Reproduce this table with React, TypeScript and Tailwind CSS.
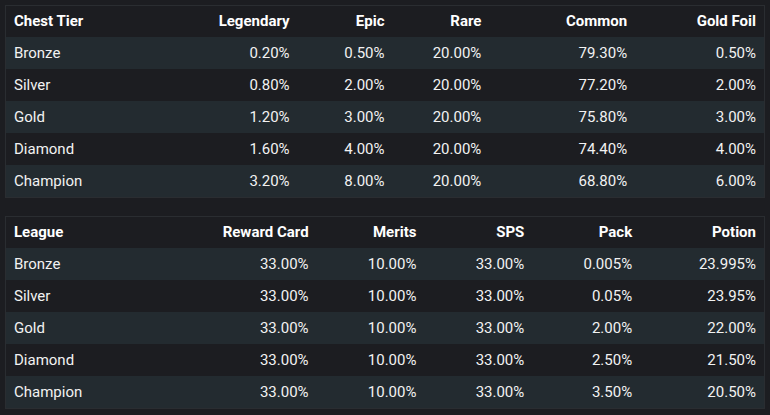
import React from "react";

const t1Head = ["Chest Tier", "Legendary", "Epic", "Rare", "Common", "Gold Foil"];
const t1W = [195, 98, 95, 97, 146, 129];
const t1Rows = [
  ["Bronze", "0.20%", "0.50%", "20.00%", "79.30%", "0.50%"],
  ["Silver", "0.80%", "2.00%", "20.00%", "77.20%", "2.00%"],
  ["Gold", "1.20%", "3.00%", "20.00%", "75.80%", "3.00%"],
  ["Diamond", "1.60%", "4.00%", "20.00%", "74.40%", "4.00%"],
  ["Champion", "3.20%", "8.00%", "20.00%", "68.80%", "6.00%"],
];
const t2Head = ["League", "Reward Card", "Merits", "SPS", "Pack", "Potion"];
const t2W = [204, 108, 108, 108, 108, 124];
const t2Rows = [
  ["Bronze", "33.00%", "10.00%", "33.00%", "0.005%", "23.995%"],
  ["Silver", "33.00%", "10.00%", "33.00%", "0.05%", "23.95%"],
  ["Gold", "33.00%", "10.00%", "33.00%", "2.00%", "22.00%"],
  ["Diamond", "33.00%", "10.00%", "33.00%", "2.50%", "21.50%"],
  ["Champion", "33.00%", "10.00%", "33.00%", "3.50%", "20.50%"],
];

function Table({ head, widths, rows }: { head: string[]; widths: number[]; rows: string[][] }) {
  return (
    <div className="border border-[#2a2d31] bg-[#1c1d21]">
      <div className="flex h-[31px] items-center">
        {head.map((h, i) => (
          <div
            key={i}
            style={{ width: widths[i] - (i === 0 ? 1 : 0) }}
            className={`font-bold text-[15px] text-white px-2 ${i === 0 ? "text-left" : "text-right"}`}
          >
            {h}
          </div>
        ))}
      </div>
      {rows.map((r, ri) => (
        <div
          key={ri}
          className={`flex h-[32px] items-center ${ri % 2 === 0 ? "bg-[#232b30]" : "bg-[#1c1d21]"}`}
        >
          {r.map((c, i) => (
            <div
              key={i}
              style={{ width: widths[i] - (i === 0 ? 1 : 0) }}
              className={`text-[15px] text-[#f2f2f2] px-2 ${i === 0 ? "text-left" : "text-right"}`}
            >
              {c}
            </div>
          ))}
        </div>
      ))}
    </div>
  );
}

export default function App() {
  return (
    <div
      className="w-[770px] h-[415px] bg-[#1c1d21] pt-[5px] px-[5px] flex flex-col gap-[18px]"
      style={{ fontFamily: "Roboto, 'Liberation Sans', sans-serif" }}
    >
      <Table head={t1Head} widths={t1W} rows={t1Rows} />
      <Table head={t2Head} widths={t2W} rows={t2Rows} />
    </div>
  );
}
